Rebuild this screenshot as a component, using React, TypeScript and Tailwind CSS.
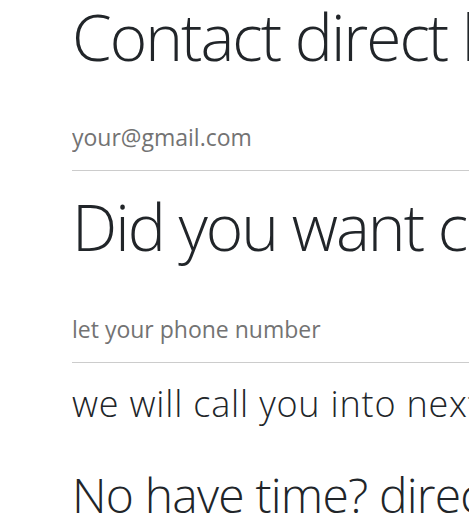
const font = { fontFamily: '"Open Sans", "Noto Sans", sans-serif' };

const App: React.FC = () => {
    return (
        <div className="w-[469px] h-[518px] overflow-hidden bg-white" style={font}>
            <div className="pl-[72px] w-[900px] whitespace-nowrap text-[#212529]">
                <h1 className="-mt-[3px] text-[64px] leading-[80px] tracking-[-2px] font-light">Contact direct line</h1>
                <input
                    type="email"
                    placeholder="your@gmail.com"
                    className="mt-[42px] block w-[700px] pt-0 pb-[15px] text-[23px] leading-[36px] border-b border-[#cccccc] outline-none placeholder:text-[#737373]"
                />
                <h1 className="mt-[16px] text-[64px] leading-[80px] tracking-[-2px] font-light">Did you want call?</h1>
                <input
                    type="tel"
                    placeholder="let your phone number"
                    className="mt-[44px] block w-[700px] pt-0 pb-[15px] text-[23px] leading-[36px] border-b border-[#cccccc] outline-none placeholder:text-[#737373]"
                />
                <p className="mt-[19px] text-[36px] leading-[44px] tracking-[0.8px] font-light">we will call you into next 24 hours</p>
                <h2 className="mt-[39px] text-[48px] leading-[60px] tracking-[-0.8px] font-light">No have time? direct message</h2>
            </div>
        </div>
    );
}

export default App;
